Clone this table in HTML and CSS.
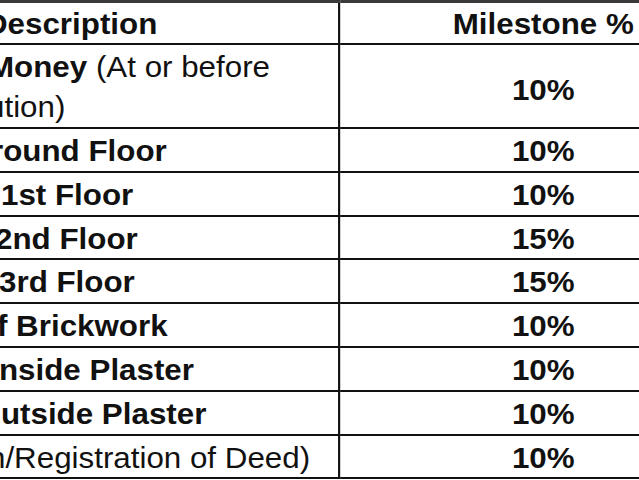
FILE: index.html
```html
<!DOCTYPE html>
<html lang="en">
<head>
<meta charset="utf-8">
<title>Payment Plan</title>
<link rel="stylesheet" href="styles.css">
</head>
<body>
<div class="page">
  <div class="sheet">
    <table class="plan">
      <colgroup><col class="c1"><col class="c2"></colgroup>
      <thead>
        <tr>
          <th class="desc"><span class="txt t-head">Description</span></th>
          <th class="pct">Milestone %</th>
        </tr>
      </thead>
      <tbody>
        <tr class="two">
          <td class="desc"><span class="txt t-money">Money <span class="reg">(At or before</span></span><span class="txt reg t-exec">Execution)</span></td>
          <td class="pct">10%</td>
        </tr>
        <tr>
          <td class="desc"><span class="txt t-ground">Ground Floor</span></td>
          <td class="pct">10%</td>
        </tr>
        <tr>
          <td class="desc"><span class="txt t-first">1st Floor</span></td>
          <td class="pct">10%</td>
        </tr>
        <tr>
          <td class="desc"><span class="txt t-second">2nd Floor</span></td>
          <td class="pct">15%</td>
        </tr>
        <tr>
          <td class="desc"><span class="txt t-third">3rd Floor</span></td>
          <td class="pct">15%</td>
        </tr>
        <tr>
          <td class="desc"><span class="txt t-brick">of Brickwork</span></td>
          <td class="pct">10%</td>
        </tr>
        <tr>
          <td class="desc"><span class="txt t-inside">Inside Plaster</span></td>
          <td class="pct">10%</td>
        </tr>
        <tr>
          <td class="desc"><span class="txt t-outside">Outside Plaster</span></td>
          <td class="pct">10%</td>
        </tr>
        <tr>
          <td class="desc"><span class="txt reg t-deed">(On Possession/Registration of Deed)</span></td>
          <td class="pct">10%</td>
        </tr>
      </tbody>
    </table>
  </div>
</div>
</body>
</html>
```
FILE: styles.css
```css
html, body {
  margin: 0;
  padding: 0;
  background: #fff;
  overflow: hidden;
}

.page {
  width: 639px;
  height: 480px;
  overflow: hidden;
  background: #fff;
}

.sheet {
  width: 691px;
  transform: scaleX(1.08);
  transform-origin: 0 0;
}

.plan {
  width: 691px;
  table-layout: fixed;
  border-collapse: collapse;
  font-family: "Liberation Sans", Arial, sans-serif;
  font-size: 29px;
  font-weight: bold;
  color: #111;
}

.c1 { width: 314px; }
.c2 { width: 377px; }

.plan th,
.plan td {
  padding: 3px 0 0.8px;
  line-height: 38px;
  border: none;
  border-bottom: 2px solid #111;
  vertical-align: middle;
}

.plan th {
  border-top: 3px solid #3a3a3a;
  padding: 3px 0 0;
  line-height: 37px;
  font-weight: bold;
}

.plan .desc {
  text-align: left;
  border-right: 2px solid #111;
  white-space: nowrap;
}

.plan .pct {
  text-align: center;
}

.plan .two td {
  padding: 2px 0 0;
}

.plan .two .desc {
  line-height: 40px;
}

.plan .two .pct {
  padding-top: 8px;
}

.txt {
  display: block;
}

.reg {
  font-weight: normal;
}

.t-head    { margin-left: -13.9px; }
.t-money   { margin-left: -11.1px; }
.t-exec    { margin-left: -76.5px; }
.t-ground  { margin-left: -30.9px; }
.t-first   { margin-left: 0.9px; }
.t-second  { margin-left: -4.6px; }
.t-third   { margin-left: -0.9px; }
.t-brick   { margin-left: -20.5px; }
.t-inside  { margin-left: -9px; }
.t-outside { margin-left: -21.7px; }
.t-deed    { margin-left: -199.7px; }
```
